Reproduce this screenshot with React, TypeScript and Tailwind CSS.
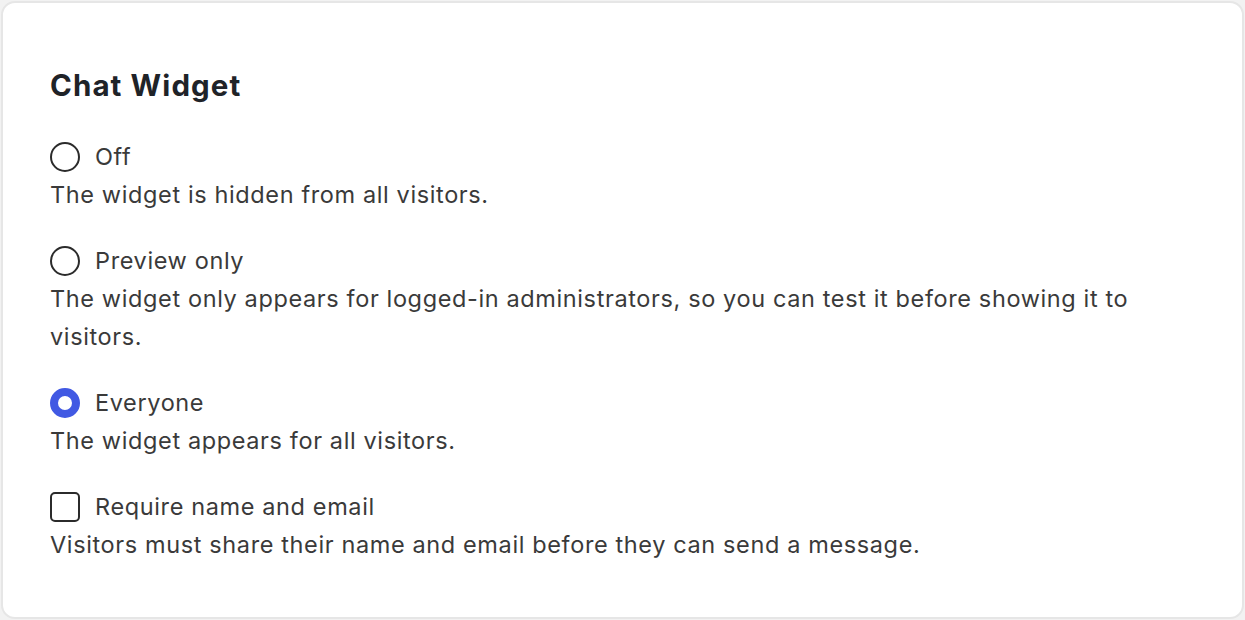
import { useState } from 'react';

type Mode = 'off' | 'preview' | 'everyone';

const options: { value: Mode; label: string; help: string }[] = [
  { value: 'off', label: 'Off', help: 'The widget is hidden from all visitors.' },
  {
    value: 'preview',
    label: 'Preview only',
    help: 'The widget only appears for logged-in administrators, so you can test it before showing it to visitors.',
  },
  { value: 'everyone', label: 'Everyone', help: 'The widget appears for all visitors.' },
];

function Radio({ checked }: { checked: boolean }) {
  return checked ? (
    <span className="w-[30px] h-[30px] rounded-full border-[8px] border-[#4159e3] bg-white shrink-0" />
  ) : (
    <span className="w-[30px] h-[30px] rounded-full border-2 border-[#2b2b2b] bg-white shrink-0" />
  );
}

export default function App() {
  const [mode, setMode] = useState<Mode>('everyone');
  const [requireInfo, setRequireInfo] = useState(false);

  return (
    <div className="min-h-screen bg-[#f2f2f2] p-px font-['Inter',sans-serif]">
      <div className="h-[618px] bg-white border-2 border-[#e6e6e6] rounded-[14px] pl-[47px] pr-10 pt-16">
        <h2 className="text-[29.5px] leading-9 font-bold text-[#1f2328] tracking-[1.1px]">Chat Widget</h2>

        <div className="mt-[39px] flex flex-col gap-8">
          {options.map((o) => (
            <div key={o.value}>
              <label className="flex items-center gap-[15px] cursor-pointer" onClick={() => setMode(o.value)}>
                <Radio checked={mode === o.value} />
                <span className="text-[23.5px] leading-[30px] tracking-[0.62px] text-[#3a3a3a]">{o.label}</span>
              </label>
              <p className="mt-1 text-[23.5px] leading-[38px] tracking-[0.62px] text-[#3a3a3a] max-w-[1100px]">
                {o.help}
              </p>
            </div>
          ))}

          <div>
            <label className="flex items-center gap-[15px] cursor-pointer" onClick={() => setRequireInfo(!requireInfo)}>
              <span className="w-[30px] h-[30px] rounded-[5px] border-2 border-[#2b2b2b] bg-white shrink-0 flex items-center justify-center">
                {requireInfo && (
                  <svg viewBox="0 0 24 24" className="w-5 h-5" fill="none" stroke="#4159e3" strokeWidth={3}>
                    <path d="M5 12l5 5L19 7" />
                  </svg>
                )}
              </span>
              <span className="text-[23.5px] leading-[30px] tracking-[0.62px] text-[#3a3a3a]">Require name and email</span>
            </label>
            <p className="mt-1 text-[23.5px] leading-[38px] tracking-[0.62px] text-[#3a3a3a]">
              Visitors must share their name and email before they can send a message.
            </p>
          </div>
        </div>
      </div>
    </div>
  );
}
